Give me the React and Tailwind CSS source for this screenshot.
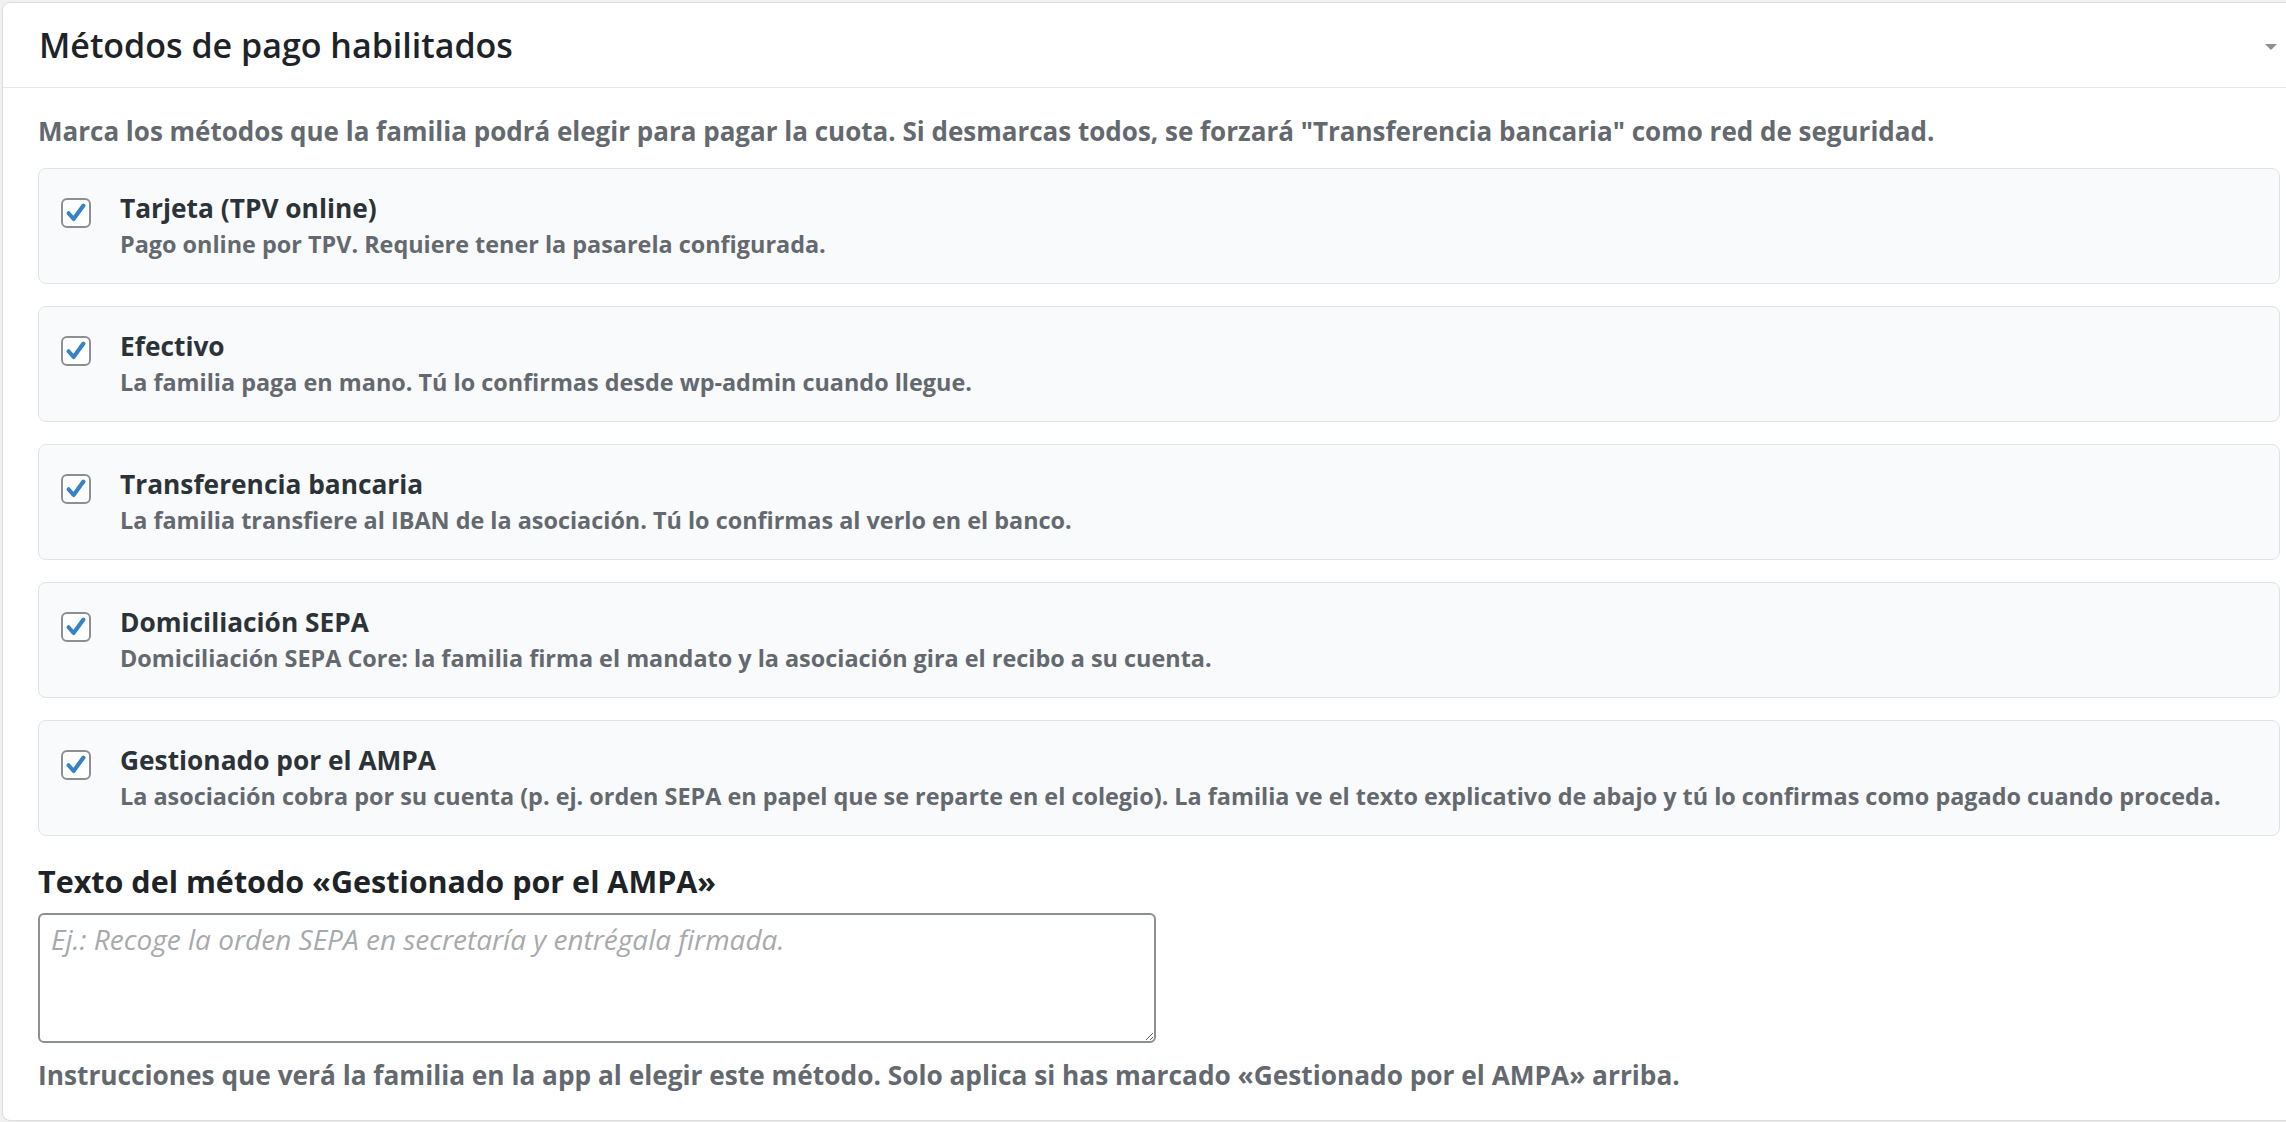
import { useState } from 'react';

const METHODS = [
  {
    id: 'tpv',
    title: 'Tarjeta (TPV online)',
    desc: 'Pago online por TPV. Requiere tener la pasarela configurada.',
  },
  {
    id: 'cash',
    title: 'Efectivo',
    desc: 'La familia paga en mano. Tú lo confirmas desde wp-admin cuando llegue.',
  },
  {
    id: 'transfer',
    title: 'Transferencia bancaria',
    desc: 'La familia transfiere al IBAN de la asociación. Tú lo confirmas al verlo en el banco.',
  },
  {
    id: 'sepa',
    title: 'Domiciliación SEPA',
    desc: 'Domiciliación SEPA Core: la familia firma el mandato y la asociación gira el recibo a su cuenta.',
  },
  {
    id: 'ampa',
    title: 'Gestionado por el AMPA',
    desc: 'La asociación cobra por su cuenta (p. ej. orden SEPA en papel que se reparte en el colegio). La familia ve el texto explicativo de abajo y tú lo confirmas como pagado cuando proceda.',
  },
];

const Check = ({ checked, onClick }) => (
  <button
    type="button"
    onClick={onClick}
    className="mt-[8px] w-[30px] h-[30px] shrink-0 rounded-[6px] border-2 border-[#8c8f94] bg-white flex items-center justify-center"
  >
    {checked && (
      <svg viewBox="0 0 20 20" className="w-[24px] h-[24px]">
        <path d="M3.8 10.2 L8 15 L16.2 3.8" fill="none" stroke="#3582c4" strokeWidth="3.4" strokeLinecap="round" strokeLinejoin="round" />
      </svg>
    )}
  </button>
);

const App = () => {
  const [enabled, setEnabled] = useState({ tpv: true, cash: true, transfer: true, sepa: true, ampa: true });
  const [text, setText] = useState('');

  const toggle = (id) => setEnabled((s) => ({ ...s, [id]: !s[id] }));

  return (
    <div className="w-[2286px] h-[1122px] overflow-hidden bg-[#f0f0f1] pt-[2px] pl-[2px] font-['Open_Sans',sans-serif]">
      <div className="w-[2314px] bg-white border border-[#dcdcde] rounded-[8px]">
        <div className="h-[85px] flex items-center justify-between pl-[36px] pr-[38px] border-b border-[#e8e8e8]">
          <h2 className="text-[34px] font-semibold text-[#1d2327]">Métodos de pago habilitados</h2>
          <span className="mt-[4px] w-0 h-0 border-l-[6px] border-r-[6px] border-t-[6px] border-l-transparent border-r-transparent border-t-[#8c8f94]"></span>
        </div>

        <div className="px-[35px] pt-[26px] pb-[27px]">
          <p className="text-[26px] leading-[34px] font-bold text-[#646970]">
            Marca los métodos que la familia podrá elegir para pagar la cuota. Si desmarcas todos, se forzará "Transferencia bancaria" como red de seguridad.
          </p>

          <div className="mt-[20px] flex flex-col gap-[22px]">
            {METHODS.map((m) => (
              <label
                key={m.id}
                className="flex items-start gap-[29px] bg-[#f9fafb] border border-[#e0e2e5] rounded-[8px] pl-[22px] pr-[22px] pt-[21px] pb-[23px]"
              >
                <Check checked={enabled[m.id]} onClick={() => toggle(m.id)} />
                <div className="flex flex-col">
                  <span className="text-[26.3px] leading-[36px] font-bold text-[#2c3338]">{m.title}</span>
                  <span className="mt-[3px] text-[23.4px] leading-[31px] font-bold text-[#646970]">{m.desc}</span>
                </div>
              </label>
            ))}
          </div>

          <h3 className="mt-[25px] text-[30.5px] leading-[40px] font-bold text-[#1d2327]">
            Texto del método «Gestionado por el AMPA»
          </h3>
          <textarea
            value={text}
            onChange={(e) => setText(e.target.value)}
            placeholder="Ej.: Recoge la orden SEPA en secretaría y entrégala firmada."
            className="mt-[12px] block w-[1118px] h-[130px] border-2 border-[#8c8f94] rounded-[6px] px-[11px] py-[5px] text-[28px] leading-[39px] text-[#2c3338] placeholder:text-[#a7aaad] placeholder:italic outline-none"
          />
          <p className="mt-[15px] text-[26.25px] leading-[35px] font-bold text-[#646970]">
            Instrucciones que verá la familia en la app al elegir este método. Solo aplica si has marcado «Gestionado por el AMPA» arriba.
          </p>
        </div>
      </div>
    </div>
  );
};

export default App;
